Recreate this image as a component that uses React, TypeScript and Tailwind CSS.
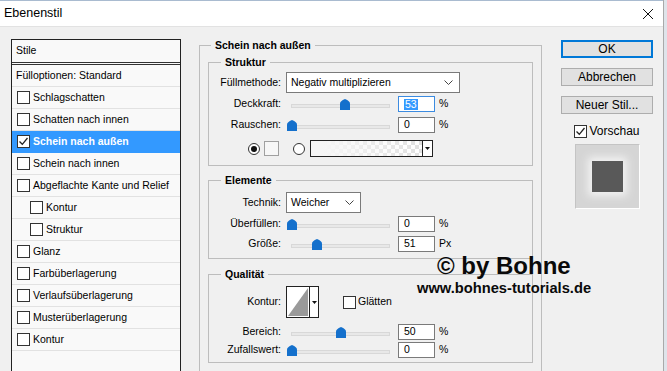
import type { ReactNode } from 'react'

const LIST = [
  { label: 'Schlagschatten' },
  { label: 'Schatten nach innen' },
  { label: 'Schein nach außen', active: true },
  { label: 'Schein nach innen' },
  { label: 'Abgeflachte Kante und Relief' },
  { label: 'Kontur', indent: true },
  { label: 'Struktur', indent: true },
  { label: 'Glanz' },
  { label: 'Farbüberlagerung' },
  { label: 'Verlaufsüberlagerung' },
  { label: 'Musterüberlagerung' },
  { label: 'Kontur' },
]

function Check({ checked }: { checked?: boolean }) {
  return (
    <span className="flex h-[13px] w-[13px] shrink-0 items-center justify-center border border-[#333] bg-white">
      {checked && (
        <svg width="11" height="11" viewBox="0 0 11 11">
          <path d="M1.5 5.5 L4.3 8.3 L9.5 2" fill="none" stroke="#222" strokeWidth="1.3" />
        </svg>
      )}
    </span>
  )
}

function Slider({ pos }: { pos: number }) {
  return (
    <div className="relative h-[16px] w-[110px]">
      <div className="absolute left-[5px] right-[6px] top-[8px] h-[4px] border border-[#d8d8d8] bg-[#e8e8e8]" />
      <svg className="absolute top-[3px]" style={{ left: pos }} width="10" height="11" viewBox="0 0 10 11">
        <path d="M0 4.5 Q0 2 5 0 Q10 2 10 4.5 V11 H0 Z" fill="#1470cc" />
      </svg>
    </div>
  )
}

function Field({ value, focused }: { value: string; focused?: boolean }) {
  return (
    <div
      className={`ml-[2px] flex h-[16px] w-[37px] items-center bg-white pl-[5px] ${
        focused ? 'border border-[#3c8be0]' : 'border border-[#7a7a7a]'
      }`}
    >
      {focused ? <span className="bg-[#3399ff] px-[1px] leading-[11px] text-white">{value}</span> : value}
    </div>
  )
}

function Label({ children }: { children: ReactNode }) {
  return <span className="w-[73px] shrink-0 pr-[1px] text-right">{children}</span>
}

function SliderRow({ label, pos, value, unit, focused, className }: {
  label: string
  pos: number
  value: string
  unit: string
  focused?: boolean
  className: string
}) {
  return (
    <div className={`flex h-[16px] items-center ${className}`}>
      <Label>{label}</Label>
      <span className="ml-[4px]" />
      <Slider pos={pos} />
      <Field value={value} focused={focused} />
      <span className="ml-[4px]">{unit}</span>
    </div>
  )
}

function Select({ text, w }: { text: string; w: string }) {
  return (
    <div className={`ml-[4px] flex h-[21px] items-center justify-between border border-[#7a7a7a] bg-white pl-[4px] pr-[6px] ${w}`}>
      <span>{text}</span>
      <svg width="9" height="5" viewBox="0 0 9 5">
        <path d="M0.5 0.5 L4.5 4.5 L8.5 0.5" fill="none" stroke="#444" strokeWidth="1" />
      </svg>
    </div>
  )
}

function Radio({ on }: { on?: boolean }) {
  return (
    <span className="flex h-[12px] w-[12px] items-center justify-center rounded-full border border-[#333] bg-white">
      {on && <span className="h-[6px] w-[6px] rounded-full bg-[#111]" />}
    </span>
  )
}

function Group({ title, className, children }: { title: string; className: string; children: ReactNode }) {
  return (
    <fieldset className={`ml-[8px] w-[325px] border border-[#bdbdbd] ${className}`}>
      <legend className="ml-[12px] px-[4px] font-bold leading-[14px]">{title}</legend>
      {children}
    </fieldset>
  )
}

export default function App() {
  return (
    <div className="relative flex h-[371px] w-[667px] overflow-hidden bg-[#dfe4ea] font-['Liberation_Sans',Arial,sans-serif] text-[10.5px] text-black">
      <div className="h-full w-[664px] border-r border-[#a9a9a9] bg-[#f0f0f0]">
        {/* title bar */}
        <div className="flex h-[27px] items-center justify-between border-t border-b border-t-[#a9bbd0] border-b-[#e2e2e2] bg-white pl-[4px] pr-[9px]">
          <span className="text-[12.5px]">Ebenenstil</span>
          <svg width="12" height="12" viewBox="0 0 12 12">
            <path d="M1 1 L11 11 M11 1 L1 11" stroke="#111" strokeWidth="1" />
          </svg>
        </div>

        <div className="flex">
          {/* style list */}
          <div className="ml-[11px] mt-[12px] h-[340px] w-[170px] shrink-0 border border-[#222] bg-[#f9f9f9]">
            <div className="flex h-[25px] items-center border-b-[3px] border-double border-[#333] pl-[4px]">Stile</div>
            <div className="flex h-[22px] items-center border-b border-[#e2e2e2] pl-[4px]">Fülloptionen: Standard</div>
            {LIST.map((item, i) => (
              <div
                key={i}
                className={`flex h-[22px] items-center border-b ${
                  item.active ? 'border-[#3399ff] bg-[#3399ff] font-bold text-white' : 'border-[#e2e2e2]'
                } ${item.indent ? 'pl-[18px]' : 'pl-[5px]'}`}
              >
                <Check checked={item.active} />
                <span className="ml-[3px]">{item.label}</span>
              </div>
            ))}
          </div>

          {/* settings */}
          <fieldset className="ml-[18px] mt-[11px] h-[345px] w-[343px] shrink-0 border border-[#bdbdbd]">
            <legend className="ml-[11px] px-[4px] font-bold leading-[14px]">Schein nach außen</legend>

            <Group title="Struktur" className="mt-[3px] pb-[8px]">
              <div className="mt-[3px] flex items-center">
                <Label>Füllmethode:</Label>
                <Select text="Negativ multiplizieren" w="w-[174px]" />
              </div>
              <SliderRow label="Deckkraft:" pos={54} value="53" unit="%" focused className="mt-[3px]" />
              <SliderRow label="Rauschen:" pos={1} value="0" unit="%" className="mt-[5px]" />
              <div className="mt-[7px] flex h-[17px] items-center pl-[39px]">
                <Radio on />
                <span className="ml-[4px] h-[15px] w-[15px] border border-[#a0a0a0] bg-[#f7f7f7]" />
                <span className="ml-[14px]">
                  <Radio />
                </span>
                <div className="ml-[5px] flex h-[17px] w-[123px] border border-[#222]">
                  <div className="flex-1 bg-[repeating-conic-gradient(#d9d9d9_0_25%,#ffffff_0_50%)] bg-[length:8px_8px]">
                    <div className="h-full w-full bg-[linear-gradient(to_right,#f6f6f6_10%,rgba(255,255,255,0.2))]" />
                  </div>
                  <div className="flex w-[10px] items-center justify-center border-l border-[#222] bg-white">
                    <svg width="5" height="3" viewBox="0 0 5 3">
                      <path d="M0 0 H5 L2.5 3 Z" fill="#111" />
                    </svg>
                  </div>
                </div>
              </div>
            </Group>

            <Group title="Elemente" className="mt-[7px] pb-[6px]">
              <div className="mt-[5px] flex items-center">
                <Label>Technik:</Label>
                <Select text="Weicher" w="w-[75px]" />
              </div>
              <SliderRow label="Überfüllen:" pos={1} value="0" unit="%" className="mt-[3px]" />
              <SliderRow label="Größe:" pos={26} value="51" unit="Px" className="mt-[4px]" />
            </Group>

            <Group title="Qualität" className="mt-[8px] pb-[4px]">
              <div className="mt-[5px] flex items-center">
                <Label>Kontur:</Label>
                <div className="ml-[4px] flex h-[32px] w-[33px] border border-[#222] bg-white">
                  <svg width="22" height="30" viewBox="0 0 22 30" className="shrink-0">
                    <path d="M1 29 L21 1 V29 Z" fill="#9a9a9a" />
                  </svg>
                  <div className="flex flex-1 items-center justify-center border-l border-[#222]">
                    <svg width="5" height="3" viewBox="0 0 5 3">
                      <path d="M0 0 H5 L2.5 3 Z" fill="#111" />
                    </svg>
                  </div>
                </div>
                <span className="ml-[24px]">
                  <Check />
                </span>
                <span className="ml-[2px]">Glätten</span>
              </div>
              <SliderRow label="Bereich:" pos={50} value="50" unit="%" className="mt-[6px]" />
              <SliderRow label="Zufallswert:" pos={1} value="0" unit="%" className="mt-[2px]" />
            </Group>
          </fieldset>

          {/* buttons */}
          <div className="ml-[19px] mt-[13px] flex w-[92px] flex-col items-center text-[12px]">
            <button type="button" className="h-[18px] w-[92px] border-2 border-[#0078d7] bg-[#e1e1e1] leading-[14px]">
              OK
            </button>
            <button type="button" className="mt-[10px] h-[18px] w-[92px] border border-[#adadad] bg-[#e1e1e1] leading-[16px]">
              Abbrechen
            </button>
            <button type="button" className="mt-[10px] h-[18px] w-[92px] border border-[#adadad] bg-[#e1e1e1] leading-[16px]">
              Neuer Stil...
            </button>
            <div className="mt-[10px] flex h-[14px] items-center">
              <Check checked />
              <span className="ml-[2px]">Vorschau</span>
            </div>
            <div className="mt-[6px] flex h-[65px] w-[65px] items-center justify-center border border-b-white border-l-[#c4c4c4] border-r-white border-t-[#c4c4c4] bg-[#d5d5d5]">
              <div className="h-[31px] w-[31px] bg-[#595959] shadow-[0_0_8px_4px_#f2f2f2]" />
            </div>
          </div>
        </div>
      </div>

      {/* watermark */}
      <div className="absolute left-[417px] top-[254px] flex flex-col font-['Liberation_Sans',Arial,sans-serif] font-bold text-[#0a0a0a]">
        <span className="ml-[20px] text-[24px] leading-[24px]">© by Bohne</span>
        <span className="mt-[3px] text-[14.7px] leading-[15px]">www.bohnes-tutorials.de</span>
      </div>
    </div>
  )
}
